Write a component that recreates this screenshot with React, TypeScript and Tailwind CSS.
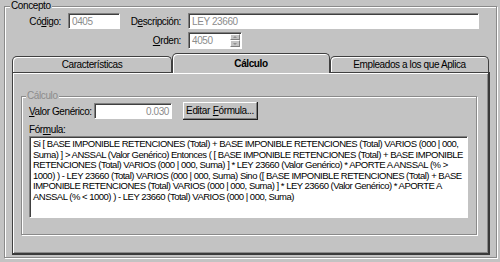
const font = { fontFamily: "'Liberation Sans', Arial, sans-serif" };

const lines = [
  "Si [ BASE IMPONIBLE RETENCIONES (Total) + BASE IMPONIBLE RETENCIONES (Total) VARIOS (000 | 000,",
  "Suma) ] > ANSSAL (Valor Genérico) Entonces ( [ BASE IMPONIBLE RETENCIONES (Total) + BASE IMPONIBLE",
  "RETENCIONES (Total) VARIOS (000 | 000, Suma) ] * LEY 23660 (Valor Genérico) * APORTE A ANSSAL (% >",
  "1000) ) - LEY 23660 (Total) VARIOS (000 | 000, Suma) Sino ([ BASE IMPONIBLE RETENCIONES (Total) + BASE",
  "IMPONIBLE RETENCIONES (Total) VARIOS (000 | 000, Suma) ] * LEY 23660 (Valor Genérico) * APORTE A",
  "ANSSAL (% < 1000) ) - LEY 23660 (Total) VARIOS (000 | 000, Suma)",
];

function Field({ w, h = 16, value, right }: { w: string; h?: number; value: string; right?: boolean }) {
  return (
    <div
      className={`${w} border-t border-l border-[#808080] border-b border-r border-b-white border-r-white bg-white`}
      style={{ height: h }}
    >
      <div
        className={`h-full border-t border-l border-[#404040] px-[2px] text-[#8c8c8c] leading-[13px] ${right ? "text-right" : ""}`}
      >
        {value}
      </div>
    </div>
  );
}

export default function App() {
  return (
    <div
      className="w-[500px] h-[262px] bg-[#c3c3c3] pt-[6px] pl-[4px] text-[10px] tracking-[-0.4px] text-black whitespace-nowrap"
      style={font}
    >
      {/* Concepto */}
      <div className="relative w-[493px] h-[252px] border border-[#8a8a8a] shadow-[inset_1px_1px_0_#fff,1px_1px_0_#fff]">
        <span className="absolute -top-[7px] left-[5px] bg-[#c3c3c3] px-[1px] leading-[12px]">Concepto</span>

        <div className="flex items-center h-[16px] mt-[6px]">
          <span className="w-[56px] text-right">
            Có<u>d</u>igo:
          </span>
          <div className="ml-[7px]">
            <Field w="w-[52px]" value="0405" />
          </div>
          <span className="w-[61px] text-right">
            D<u>e</u>scripción:
          </span>
          <div className="ml-[7px]">
            <Field w="w-[291px]" value="LEY 23660" />
          </div>
        </div>

        <div className="flex items-center h-[17px] mt-[3px] pl-[115px]">
          <span className="w-[61px] text-right">
            <u>O</u>rden:
          </span>
          <div className="ml-[7px] relative">
            <Field w="w-[54px]" h={17} value="4050" />
            <div className="absolute right-[2px] top-[2px] w-[10px] h-[13px] flex flex-col">
              <div className="h-[6px] bg-[#c3c3c3] border-t border-l border-white border-b border-r border-b-[#808080] border-r-[#808080] flex items-center justify-center">
                <div className="w-0 h-0 border-l-[2px] border-r-[2px] border-b-[2px] border-l-transparent border-r-transparent border-b-[#909090]" />
              </div>
              <div className="h-[7px] bg-[#c3c3c3] border-t border-l border-white border-b border-r border-b-[#808080] border-r-[#808080] flex items-center justify-center">
                <div className="w-0 h-0 border-l-[2px] border-r-[2px] border-t-[2px] border-l-transparent border-r-transparent border-t-[#909090]" />
              </div>
            </div>
          </div>
        </div>

        {/* Tabs */}
        <div className="ml-[7px] mt-[4px] w-[478px]">
          <div className="flex items-end h-[19px]">
            <div className="w-[160px] h-[16px] border-t border-l border-r border-[#404040] rounded-t-[5px] bg-[#c3c3c3] shadow-[inset_1px_1px_0_#fff] text-center leading-[15px]">
              Características
            </div>
            <div className="relative z-10 -mb-[1px] w-[158px] h-[20px] border-t border-l border-r border-[#404040] rounded-t-[5px] bg-[#c3c3c3] shadow-[inset_1px_1px_0_#fff] text-center font-bold leading-[19px]">
              Cálculo
            </div>
            <div className="w-[159px] h-[16px] border-t border-l border-r border-[#404040] rounded-t-[5px] bg-[#c3c3c3] shadow-[inset_1px_1px_0_#fff] text-center leading-[15px]">
              Empleados a los que Aplica
            </div>
          </div>
          <div className="h-[183px] border-t border-l border-[#404040] border-r-2 border-b-2 border-r-[#3a3a3a] border-b-[#3a3a3a] shadow-[inset_1px_1px_0_#fff,inset_-1px_-1px_0_#8a8a8a] pt-[23px] pl-[8px]">
            {/* Cálculo group */}
            <div className="relative w-[456px] h-[139px] border border-[#8a8a8a] shadow-[inset_1px_1px_0_#fff,1px_1px_0_#fff]">
              <span className="absolute -top-[7px] left-[4px] bg-[#c3c3c3] px-[1px] leading-[12px] text-[#8c8c8c]">
                Cálculo
              </span>
              <div className="flex items-center h-[18px] mt-[5px] pl-[7px]">
                <span className="w-[65px]">
                  <u>V</u>alor Genérico:
                </span>
                <Field w="w-[78px]" value="0.030" right />
                <div className="ml-[11px] w-[75px] h-[18px] border-r border-b border-[#202020]">
                  <div className="h-full border-t border-l border-white border-r border-b border-r-[#808080] border-b-[#808080] flex items-center justify-center leading-none">
                    Editar <u className="ml-[3px]">F</u>órmula...
                  </div>
                </div>
              </div>
              <div className="pl-[7px] mt-[4px] h-[12px] leading-[12px]">
                Fór<u>m</u>ula:
              </div>
              <div className="ml-[7px] w-[439px] h-[82px] border-t border-l border-[#808080] border-r border-b border-r-white border-b-white bg-white">
                <div className="h-full border-t border-l border-[#404040] pl-[2px] pt-[1px] text-[9.5px] tracking-[-0.5px] leading-[10.5px] overflow-hidden">
                  {lines.map((l) => (
                    <div key={l}>{l}</div>
                  ))}
                </div>
              </div>
            </div>
          </div>
        </div>
      </div>
    </div>
  );
}
